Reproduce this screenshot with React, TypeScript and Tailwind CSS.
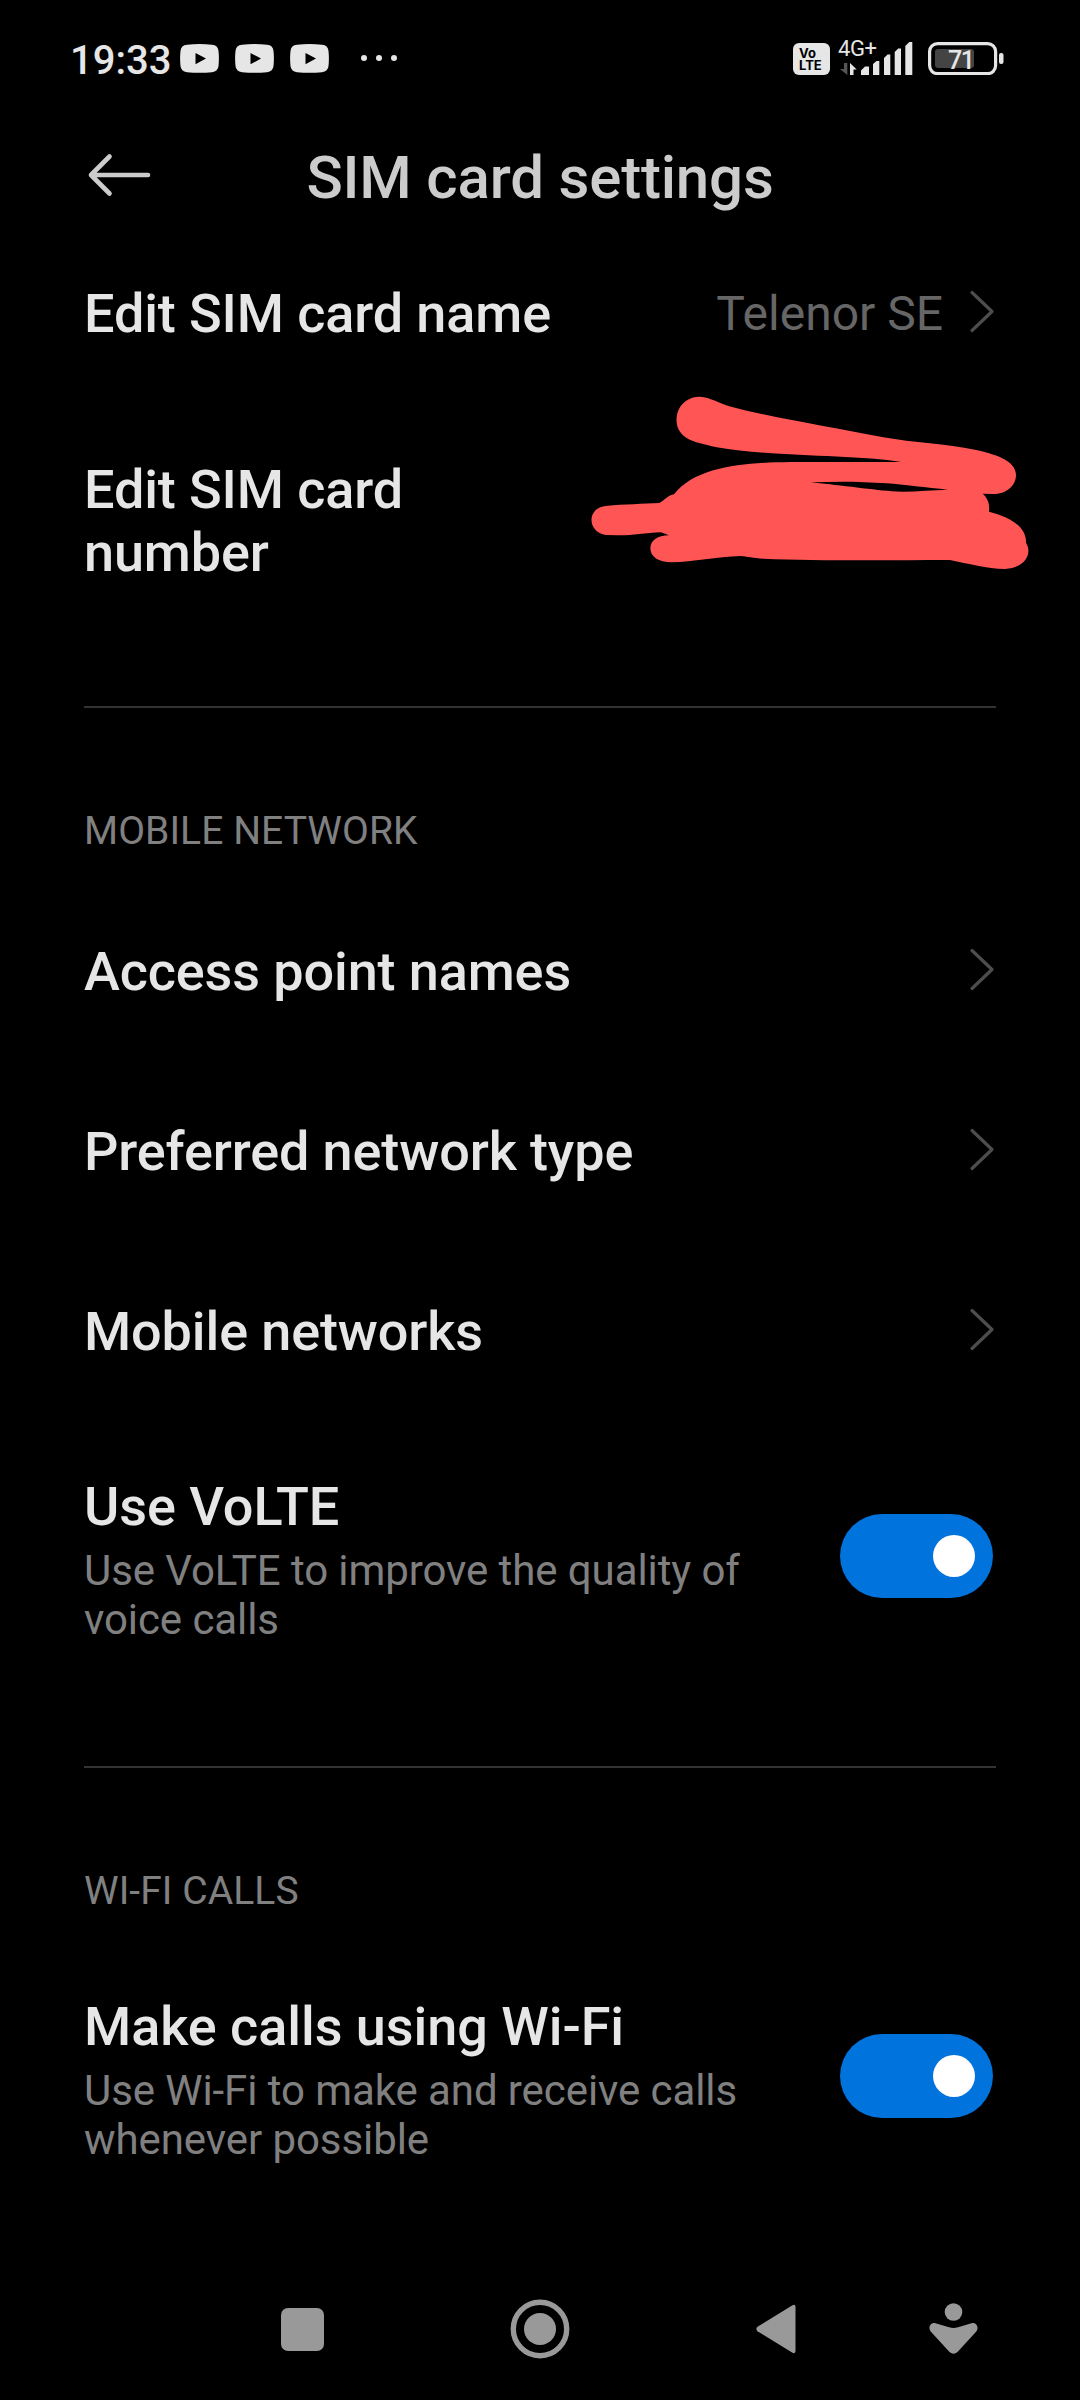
import type { ReactNode } from "react";

function YoutubeIcon() {
  return (
    <svg width="39" height="29" viewBox="0 0 39 29">
      <path
        fill="#e6e6e6"
        fillRule="evenodd"
        d="M7 .8Q19.500-.8 32 .8Q38 1.200 38.500 7Q39.300 14.500 38.500 22Q38 27.600 32 28.200Q19.500 29.200 7 28.200Q1 27.600 .5 22Q-.3 14.500 .5 7Q1 1.200 7 .8ZM15.500 9V20.300L26 14.600Z"
      />
    </svg>
  );
}

function VolteIcon() {
  return (
    <div className="flex h-8 w-[37px] flex-col items-center justify-center rounded-[6px] bg-[#e6e6e6] font-[Inter,sans-serif] text-[13px] leading-[12px] font-bold text-black">
      <span className="w-[25px]">Vo</span>
      <span className="w-[25px]">LTE</span>
    </div>
  );
}

function SignalIcon() {
  return (
    <svg className="ml-[6px]" width="78" height="48" viewBox="0 -12 78 48" fill="#e6e6e6">
      <text x="2" y="16.500" fontFamily="Roboto, sans-serif" fontSize="22" textLength="39">
        4G+
      </text>
      <path d="M8 24h3.300v12L4 30h4Z" fill="#555" />
      <path d="M14 36V24l6.700 6.500H17.500V36Z" />
      <path d="M25 36v-4.500l4-4h4V36ZM37 36V25l3.500-3h2.800v14ZM48 36V19l3.500-3.500h2.800V36ZM58.700 36V13l3.500-3.500H65V36ZM69.300 36V7l4-4h3v33Z" />
    </svg>
  );
}

function BatteryIcon() {
  return (
    <svg width="76" height="33" viewBox="0 0 76 33">
      <rect x="1.600" y="1.600" width="66" height="30" rx="8" fill="none" stroke="#e6e6e6" strokeWidth="3.200" />
      <rect x="7" y="7" width="39" height="19" rx="3" fill="#444" />
      <rect x="71" y="11" width="4.500" height="11" rx="2" fill="#e6e6e6" />
      <text x="20" y="27" fontFamily="Roboto, sans-serif" fontWeight="500" fontSize="25" textLength="27" fill="#e6e6e6">
        71
      </text>
    </svg>
  );
}

function StatusBar() {
  return (
    <header className="flex h-[120px] items-start justify-between pr-[76px] pl-[70px] text-[#e6e6e6]">
      <div className="flex pt-[44px]">
        <span className="-mt-[9px] w-[110px] text-[40px] leading-[52px] font-medium">19:33</span>
        <div className="flex gap-4">
          <YoutubeIcon />
          <YoutubeIcon />
          <YoutubeIcon />
        </div>
        <div className="mt-[11px] ml-8 flex gap-[9px]">
          <i className="size-[6px] rounded-full bg-[#e6e6e6]" />
          <i className="size-[6px] rounded-full bg-[#e6e6e6]" />
          <i className="size-[6px] rounded-full bg-[#e6e6e6]" />
        </div>
      </div>
      <div className="flex h-[75px] items-end">
        <VolteIcon />
        <SignalIcon />
        <div className="ml-[14px]">
          <BatteryIcon />
        </div>
      </div>
    </header>
  );
}

function TitleBar() {
  return (
    <div className="flex h-[102px] items-start px-[84px]">
      <svg className="mt-[31px]" width="70" height="48" viewBox="0 0 70 48" fill="none" stroke="#ccc" strokeWidth="4.600" strokeLinecap="round" strokeLinejoin="round">
        <path d="M64 24H7M25.500 5.500L7 24L25.500 42.500" />
      </svg>
      <h1 className="mt-[22px] mr-[70px] flex-1 text-center text-[60px] leading-[72px] font-medium tracking-[-0.18px] whitespace-nowrap text-[#ccc]">
        SIM card settings
      </h1>
    </div>
  );
}

function Chevron() {
  return (
    <svg width="26" height="44" viewBox="0 0 26 44" fill="none" stroke="#4d4d4d" strokeWidth="3.200" strokeLinecap="round" strokeLinejoin="round">
      <path d="M3 2.500L23 21.500L3 40.500" />
    </svg>
  );
}

function LinkRow({ title, value }: { title: string; value?: string }) {
  return (
    <div className="flex h-[180px] items-center pr-[85px] pl-[84px]">
      <span className="flex-1 pt-[4px] text-[54px] leading-[64px] font-medium tracking-[-0.12px]">{title}</span>
      {value && <span className="mr-[26px] pt-[3px] text-[48px] leading-[56px] text-[#666]">{value}</span>}
      <Chevron />
    </div>
  );
}

function Switch() {
  return (
    <div className="flex h-[84px] w-[153px] items-center justify-end rounded-full bg-[#0073dd] pr-[18px]">
      <div className="size-[42px] rounded-full bg-white" />
    </div>
  );
}

function SwitchRow({ title, children }: { title: string; children: ReactNode }) {
  return (
    <div className="flex h-[272px] items-center justify-between pr-[87px] pl-[84px]">
      <div className="pt-[7px]">
        <div className="text-[54px] leading-[64px] font-medium tracking-[-0.05px]">{title}</div>
        <p className="mt-[7px] w-[680px] text-[42px] leading-[49px] tracking-[-0.08px] text-[#808080]">{children}</p>
      </div>
      <Switch />
    </div>
  );
}

function SectionHeading({ children }: { children: ReactNode }) {
  return (
    <div className="mx-[84px] h-[174px] border-t-2 border-[#333] pt-[100px] text-[39px] leading-[46px] tracking-[0.08px] text-[#808080]">
      {children}
    </div>
  );
}

// Red marker strokes drawn over the phone number
function Scribble() {
  return (
    <svg className="absolute -top-8 left-[570px]" width="480" height="220" viewBox="0 0 1440 660" fill="#ff5555">
      <path
        fillRule="evenodd"
        d="M388 80C410 80 435 92 475 108C610 144 770 168 940 202C1030 218 1130 222 1215 239C1270 251 1338 270 1338 315C1338 350 1305 373 1268 372L1238 371C1252 383 1260 400 1257 425C1320 441 1370 470 1368 518C1388 550 1366 594 1305 597C1250 596 1195 581 1140 570C940 571 740 573 580 566C550 564 530 560 512 558C440 560 370 576 305 577C265 577 241 560 241 534C243 510 262 497 297 496L273 487C225 489 180 497 145 496L108 495C50 487 50 412 108 408C165 402 220 402 268 399C285 390 295 375 312 373C395 268 600 277 740 276L994 276C850 254 610 261 440 232C400 222 370 217 350 204C315 182 318 148 322 130C330 98 360 80 388 80ZM722 337C790 344 900 358 965 364C1020 368 1080 360 1134 359C1070 353 1000 344 950 340C870 334 800 334 722 337Z"
      />
    </svg>
  );
}

function NavBar() {
  return (
    <nav className="mt-auto flex h-[142px] items-center text-[#999]">
      <div className="ml-[281px] size-[43px] rounded-[7px] bg-[#999]" />
      <svg className="ml-[186px]" width="60" height="60" viewBox="0 0 60 60">
        <circle cx="30" cy="30" r="26.700" fill="none" stroke="currentColor" strokeWidth="5.400" />
        <circle cx="30" cy="30" r="16" fill="currentColor" />
      </svg>
      <svg className="ml-[186px]" width="40" height="50" viewBox="0 0 40 50" fill="currentColor">
        <path d="M1.500 22.800L36.500 1.200Q39.500 0 39.500 3V47Q39.500 50 36.500 48.800L1.500 27.200Q-.8 25 1.500 22.800Z" />
      </svg>
      <svg className="ml-[133px]" width="50" height="52" viewBox="0 0 50 52" fill="currentColor">
        <circle cx="24.500" cy="9" r="8.800" />
        <path d="M6.500 20.200L20 24.200Q24.500 25.600 29 24.200L42.500 20.200C47 19 50.500 24 47.300 28.500L28.500 49Q24.500 52.500 20.500 49L1.700 28.500C-1.500 24 2 19 6.500 20.200Z" />
      </svg>
    </nav>
  );
}

export default function App() {
  return (
    <main className="flex h-[2400px] w-[1080px] flex-col overflow-hidden bg-black font-[Roboto,sans-serif] text-[#e6e6e6]">
      <StatusBar />
      <TitleBar />
      <LinkRow title="Edit SIM card name" value="Telenor SE" />
      <div className="relative h-[304px] pt-[56px] pl-[84px]">
        <p className="w-[400px] text-[54px] leading-[63px] font-medium tracking-[-0.12px]">Edit SIM card number</p>
        <Scribble />
      </div>
      <SectionHeading>MOBILE NETWORK</SectionHeading>
      <LinkRow title="Access point names" />
      <LinkRow title="Preferred network type" />
      <LinkRow title="Mobile networks" />
      <SwitchRow title="Use VoLTE">Use VoLTE to improve the quality of voice calls</SwitchRow>
      <div className="h-[74px]" />
      <SectionHeading>WI-FI CALLS</SectionHeading>
      <SwitchRow title="Make calls using Wi-Fi">Use Wi-Fi to make and receive calls whenever possible</SwitchRow>
      <NavBar />
    </main>
  );
}
